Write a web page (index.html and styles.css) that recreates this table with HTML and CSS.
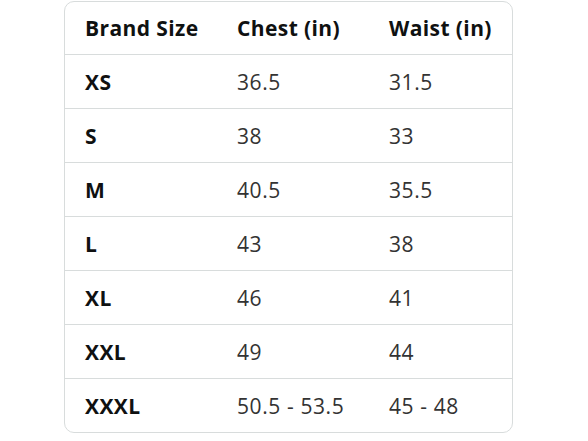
FILE: index.html
```html
<!DOCTYPE html>
<html>
<head>
<meta charset="utf-8">
<link rel="stylesheet" href="styles.css">
</head>
<body>
<div class="wrap">
<table class="size-table">
<thead>
<tr><th>Brand Size</th><th>Chest (in)</th><th>Waist (in)</th></tr>
</thead>
<tbody>
<tr><th>XS</th><td>36.5</td><td>31.5</td></tr>
<tr><th>S</th><td>38</td><td>33</td></tr>
<tr><th>M</th><td>40.5</td><td>35.5</td></tr>
<tr><th>L</th><td>43</td><td>38</td></tr>
<tr><th>XL</th><td>46</td><td>41</td></tr>
<tr><th>XXL</th><td>49</td><td>44</td></tr>
<tr><th>XXXL</th><td>50.5 - 53.5</td><td>45 - 48</td></tr>
</tbody>
</table>
</div>
</body>
</html>
```

FILE: styles.css
```css
html, body {
  margin: 0;
  padding: 0;
  background: #ffffff;
}
body {
  font-family: "Open Sans", "Noto Sans", sans-serif;
  color: #0f1111;
}
.wrap {
  padding: 1px 0 0 64px;
}
.size-table {
  width: 449px;
  border: 1px solid #d8dcdc;
  border-radius: 10px;
  border-spacing: 0;
  border-collapse: separate;
  table-layout: fixed;
}
.size-table th,
.size-table td {
  height: 52px;
  padding: 0 0 0 20px;
  text-align: left;
  font-size: 21px;
  letter-spacing: 0.4px;
  line-height: 24px;
  vertical-align: middle;
  box-sizing: content-box;
}
.size-table tbody th,
.size-table tbody td {
  height: 53px;
  border-top: 1px solid #d8dcdc;
}
.size-table th:nth-child(1) { width: 132px; }
.size-table th:nth-child(2) { width: 132px; }
.size-table th {
  font-weight: 700;
}
.size-table td {
  font-weight: 400;
  color: #333333;
  letter-spacing: 0.6px;
}
```
